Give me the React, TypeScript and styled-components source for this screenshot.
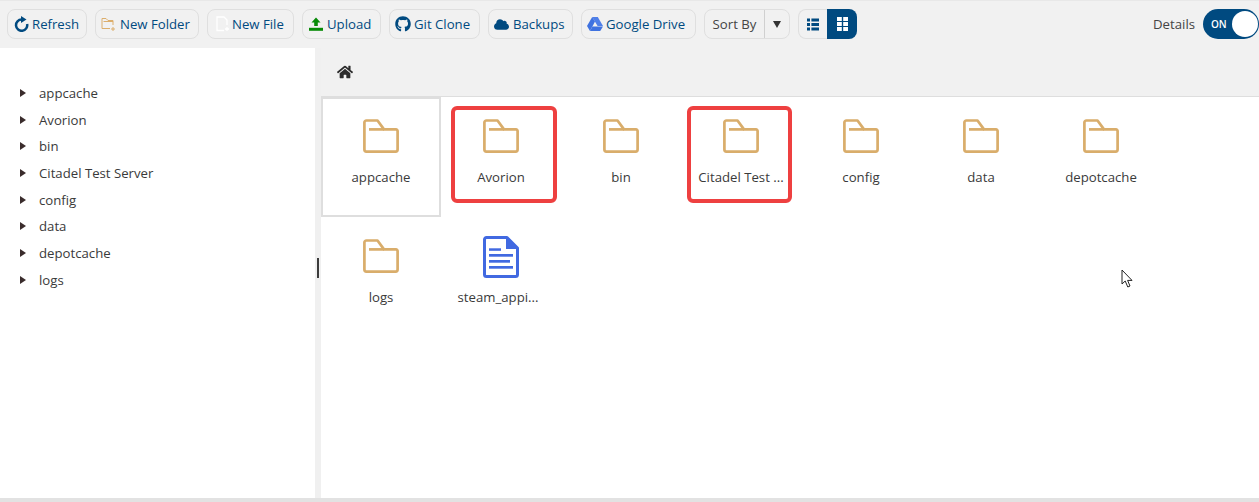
import React from "react";
import styled, { createGlobalStyle } from "styled-components";
import { FaGithub, FaCloud, FaHome } from "react-icons/fa";

const Global = createGlobalStyle`
  html, body { margin: 0; padding: 0; background: #e2e2e2; }
  body { font-family: "Open Sans", "Noto Sans", sans-serif; font-size: 13.2px; color: #333; overflow: hidden; }
`;
const Page = styled.div`
  position: relative; width: 1259px; height: 498px; background: #fff; display: flex; flex-direction: column; overflow: hidden;
`;
const Toolbar = styled.div`
  height: 48px; flex: none; box-sizing: border-box; background: #f1f1f1; border-top: 1px solid #e8e8e8;
  display: flex; align-items: center; padding: 0 0 1px 7px; gap: 8px;
`;
const Btn = styled.div<{ $w: number }>`
  width: ${(p) => p.$w}px; height: 30px; box-sizing: border-box; flex: none; display: flex; align-items: center; padding-left: 5px;
  border: 1px solid #dfdfdf; border-radius: 8px; color: #004a80; background: #f1f1f1; white-space: nowrap;
`;
const BtnIcon = styled.span`
  width: 19px; flex: none; display: flex; align-items: center; justify-content: flex-start;
`;
const SortGroup = styled.div`
  width: 86px; height: 30px; box-sizing: border-box; display: flex; border: 1px solid #dfdfdf; border-radius: 8px; color: #444;
`;
const SortLabel = styled.div`
  width: 59px; display: flex; align-items: center; justify-content: center; border-right: 1px solid #d0d0d0;
`;
const SortCaret = styled.div`
  flex: 1; display: flex; align-items: center; justify-content: center;
`;
const Caret = styled.div`
  width: 0; height: 0; border-left: 4.5px solid transparent; border-right: 4.5px solid transparent; border-top: 7px solid #333;
`;
const ViewGroup = styled.div`
  width: 59px; height: 30px; display: flex;
`;
const ViewBtn = styled.div<{ $on?: boolean }>`
  box-sizing: border-box; width: ${(p) => (p.$on ? "30px" : "29px")}; display: flex; align-items: center; justify-content: center;
  background: ${(p) => (p.$on ? "#004a80" : "transparent")};
  border: ${(p) => (p.$on ? "0" : "1px solid #dfdfdf")};
  border-right: 0;
  border-radius: ${(p) => (p.$on ? "0 8px 8px 0" : "8px 0 0 8px")};
`;
const Details = styled.div`
  margin-left: auto; display: flex; align-items: center; gap: 8px; color: #444;
`;
const Switch = styled.div`
  width: 56px; height: 30px; box-sizing: border-box; background: #004a80; border-radius: 15px; display: flex; align-items: center;
  color: #fff; font-size: 10px; font-weight: 600; padding-left: 8px; position: relative;
`;
const Knob = styled.div`
  position: absolute; right: 1px; top: 2px; width: 26px; height: 26px; border-radius: 50%; background: #fff;
`;
const Main = styled.div`
  flex: 1; display: flex; min-height: 0;
`;
const Sidebar = styled.div`
  width: 315px; flex: none; box-sizing: border-box; padding-top: 31.5px; background: #fff;
`;
const TreeRow = styled.div`
  height: 26.7px; display: flex; align-items: center; padding-left: 20px; gap: 13px; color: #3a3a3a;
`;
const Tri = styled.div`
  width: 0; height: 0; border-top: 4.5px solid transparent; border-bottom: 4.5px solid transparent; border-left: 6px solid #3a2c2c;
`;
const Splitter = styled.div`
  width: 6px; flex: none; background: #f0f0f0; position: relative;
`;
const Grip = styled.div`
  position: absolute; left: 2px; top: 210px; width: 2px; height: 20px; background: #3c3c3c;
`;
const Content = styled.div`
  flex: 1; display: flex; flex-direction: column; min-width: 0;
`;
const Crumb = styled.div`
  height: 49px; flex: none; box-sizing: border-box; background: #f1f1f1; border-bottom: 1px solid #dedede; display: flex; align-items: center; padding: 0 0 0 16px; color: #2b2b2b;
`;
const Files = styled.div`
  display: grid; grid-template-columns: repeat(auto-fill, 120px); grid-auto-rows: 120px;
`;
const Item = styled.div<{ $sel?: boolean }>`
  box-sizing: border-box; display: flex; flex-direction: column; align-items: center; padding-top: ${(p) => (p.$sel ? "20px" : "22px")};
  border: ${(p) => (p.$sel ? "2px solid #dedede" : "0")}; color: #3a3a3a;
`;
const IconBox = styled.div`
  height: 34px; display: flex; align-items: center; justify-content: center;
`;
const Label = styled.div<{ $doc?: boolean }>`
  margin-top: 15px; line-height: 18px; white-space: nowrap; padding-right: ${(p) => (p.$doc ? "6px" : "0")};
`;
const Mark = styled.div<{ $x: number; $w: number }>`
  position: absolute; left: ${(p) => p.$x}px; top: 106px; width: ${(p) => p.$w}px; height: 97px; box-sizing: border-box;
  border: 4px solid #ee4040; border-radius: 6px; pointer-events: none;
`;
const Cursor = styled.svg`
  position: absolute; left: 1121px; top: 269px;
`;

const Folder = () => (
  <svg width="36" height="34" viewBox="0 0 36 34" fill="none" stroke="#d9ad6b" strokeWidth="2.7" strokeLinejoin="round">
    <path d="M1.4 3.5 a2 2 0 0 1 2-2 H14.5 L21 10.4 H33 a1.6 1.6 0 0 1 1.6 1.6 V30.6 a2 2 0 0 1-2 2 H3.4 a2 2 0 0 1-2-2 Z" />
    <path d="M6 10.4 H21" />
  </svg>
);
const RefreshIcon = () => (
  <svg width="15" height="16" viewBox="0 0 15 16" fill="none" style={{ marginLeft: 1 }}>
    <path d="M7.6 3.6 A5.6 5.6 0 1 0 13.1 8" stroke="#004a80" strokeWidth="2.5" />
    <path d="M7 0 L12.5 3.4 L7 7 Z" fill="#004a80" />
  </svg>
);
const NewFolderIcon = () => (
  <svg width="15" height="15" viewBox="0 0 15 15" fill="none" stroke="#dcae6c" strokeWidth="1">
    <path d="M1 11.5 V1.5 H5 L7 3.5 H12 V8 M9 11.5 H1 M2.5 4.5 H12" />
    <path d="M12 10 V14 M10 12 H14" />
  </svg>
);
const NewFileIcon = () => (
  <svg width="15" height="16" viewBox="0 0 15 16" fill="none" stroke="#fff" strokeWidth="1.3" style={{ marginLeft: 2 }}>
    <path d="M9 14.5 H2 V1 H9 L12 4 V9 M12 11 V15 M10 13 H14" />
  </svg>
);
const UploadIcon = () => (
  <svg width="14" height="14" viewBox="0 0 14 14" fill="#078a07" style={{ marginLeft: 1 }}>
    <path d="M7 0.5 L11.5 5.5 H8.8 V9 H5.2 V5.5 H2.5 Z" />
    <rect x="0" y="10.8" width="14" height="3" />
  </svg>
);
const DriveIcon = () => (
  <svg width="16" height="14" viewBox="0 0 16 14">
    <path d="M5.2 0 H10.8 L16 9 H10.6 Z" fill="#4f7fe8" />
    <path d="M5.2 0 L8 4.6 L3 14 L0 9 Z" fill="#3f72e0" />
    <path d="M5.4 9.4 H16 L13.2 14 H3 Z" fill="#3f72e0" />
  </svg>
);
const ListIcon = () => (
  <svg width="12" height="13" viewBox="0 0 12 13" fill="#004a80">
    <rect x="0" y="0.5" width="3" height="3" /><rect x="4.4" y="0.5" width="7.6" height="3" />
    <rect x="0" y="5" width="3" height="3" /><rect x="4.4" y="5" width="7.6" height="3" />
    <rect x="0" y="9.5" width="3" height="3" /><rect x="4.4" y="9.5" width="7.6" height="3" />
  </svg>
);
const GridIcon = () => (
  <svg width="11" height="14" viewBox="0 0 11 14" fill="#fff">
    <rect x="0" y="0" width="4.8" height="4" /><rect x="6.2" y="0" width="4.8" height="4" />
    <rect x="0" y="5" width="4.8" height="4" /><rect x="6.2" y="5" width="4.8" height="4" />
    <rect x="0" y="10" width="4.8" height="4" /><rect x="6.2" y="10" width="4.8" height="4" />
  </svg>
);
const DocIcon = () => (
  <svg width="36" height="42" viewBox="0 0 36 42" fill="none" style={{ marginTop: 2 }}>
    <path d="M3.5 1.5 H24 L34.5 12 V38.5 a2 2 0 0 1-2 2 H3.5 a2 2 0 0 1-2-2 V3.5 a2 2 0 0 1 2-2 Z" fill="#fff" stroke="#4169e1" strokeWidth="3" strokeLinejoin="round" />
    <path d="M23 0 L36 13 H23 Z" fill="#4169e1" />
    <g fill="#4169e1">
      <rect x="6" y="12.3" width="12" height="2.5" />
      <rect x="6" y="18" width="24" height="2.7" />
      <rect x="6" y="24" width="21" height="2.7" />
      <rect x="6" y="30" width="24" height="2.7" />
    </g>
  </svg>
);

const tree = ["appcache", "Avorion", "bin", "Citadel Test Server", "config", "data", "depotcache", "logs"];
const files = [
  { n: "appcache", sel: true },
  { n: "Avorion" },
  { n: "bin" },
  { n: "Citadel Test ..." },
  { n: "config" },
  { n: "data" },
  { n: "depotcache" },
  { n: "logs" },
  { n: "steam_appi...", doc: true },
];

export default function App() {
  return (
    <Page>
      <Global />
      <Toolbar>
        <Btn $w={80}><BtnIcon><RefreshIcon /></BtnIcon>Refresh</Btn>
        <Btn $w={104}><BtnIcon><NewFolderIcon /></BtnIcon>New Folder</Btn>
        <Btn $w={87}><BtnIcon><NewFileIcon /></BtnIcon>New File</Btn>
        <Btn $w={79}><BtnIcon><UploadIcon /></BtnIcon>Upload</Btn>
        <Btn $w={91}><BtnIcon><FaGithub size={16} color="#004a80" /></BtnIcon>Git Clone</Btn>
        <Btn $w={85}><BtnIcon><FaCloud size={15} color="#004a80" /></BtnIcon>Backups</Btn>
        <Btn $w={115}><BtnIcon><DriveIcon /></BtnIcon>Google Drive</Btn>
        <SortGroup>
          <SortLabel>Sort By</SortLabel>
          <SortCaret><Caret /></SortCaret>
        </SortGroup>
        <ViewGroup>
          <ViewBtn><ListIcon /></ViewBtn>
          <ViewBtn $on><GridIcon /></ViewBtn>
        </ViewGroup>
        <Details>
          Details
          <Switch>ON<Knob /></Switch>
        </Details>
      </Toolbar>
      <Main>
        <Sidebar>
          {tree.map((t) => (
            <TreeRow key={t}><Tri />{t}</TreeRow>
          ))}
        </Sidebar>
        <Splitter><Grip /></Splitter>
        <Content>
          <Crumb><FaHome size={16} /></Crumb>
          <Files>
            {files.map((f) => (
              <Item key={f.n} $sel={f.sel}>
                <IconBox>{f.doc ? <DocIcon /> : <Folder />}</IconBox>
                <Label $doc={f.doc}>{f.n}</Label>
              </Item>
            ))}
          </Files>
        </Content>
      </Main>
      <Mark $x={451} $w={106} />
      <Mark $x={687} $w={105} />
      <Cursor width="13" height="20" viewBox="0 0 13 20" fill="#fff" stroke="#222" strokeWidth="1">
        <path d="M1 1 V15 L4.2 12 L6.8 18 L9 17 L6.6 11.4 H11 Z" />
      </Cursor>
    </Page>
  );
}
